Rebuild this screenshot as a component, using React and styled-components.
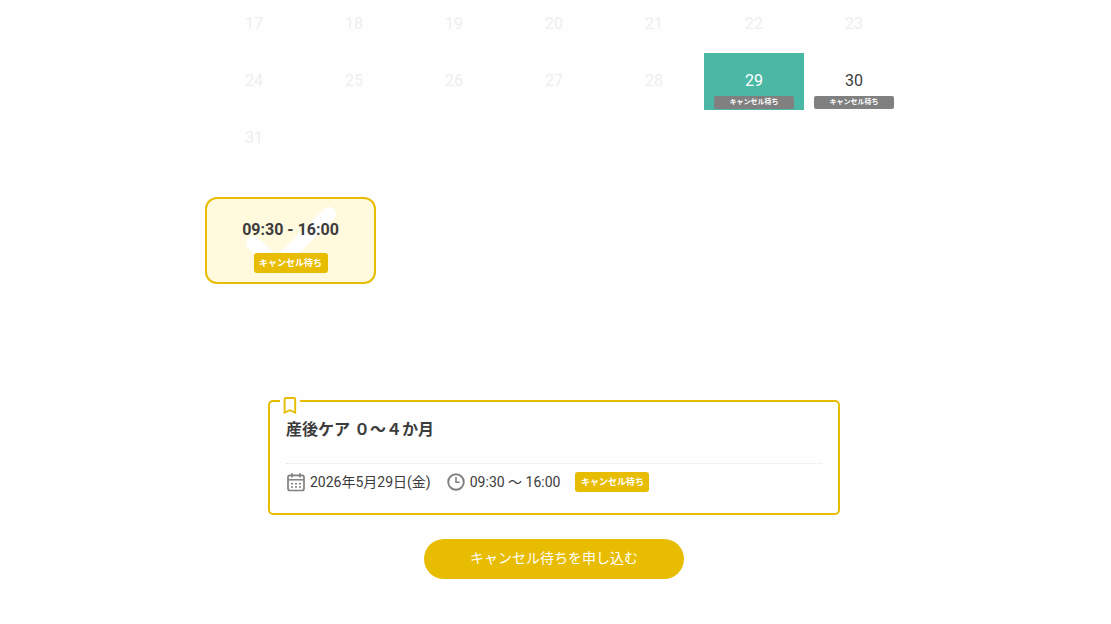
import React, { useState } from 'react';
import styled, { createGlobalStyle } from 'styled-components';

const GOLD = '#e8bc00';

const GlobalStyle = createGlobalStyle`
  *, *::before, *::after { box-sizing: border-box; }
  body {
    margin: 0;
    background: #fefefe;
    color: #3c3c3c;
    font-family: Roboto, "Noto Sans CJK JP", sans-serif;
    font-size: 14px;
    line-height: 20px;
  }
  button { font: inherit; color: inherit; border: 0; padding: 0; background: none; cursor: pointer; }
`;

const Page = styled.main`
  padding: 0 3px 44px 0;
  overflow: hidden;
`;

const Section = styled.section`
  max-width: ${(p) => p.$width}px;
  margin: 0 auto;
`;

const Calendar = styled.table`
  width: 100%;
  margin-top: -4px;
  table-layout: fixed;
  border-collapse: collapse;
`;

const Cell = styled.td`
  height: 57px;
  padding: 0;
  vertical-align: top;
  text-align: center;
  background: ${(p) => (p.$selected ? '#4bb8a5' : 'transparent')};
`;

const Day = styled.button`
  display: flex;
  flex-direction: column;
  align-items: center;
  gap: 5px;
  width: 100%;
  height: 57px;
  padding: 18px 10px 0;
  font-size: 16px;
  color: ${(p) => (p.$selected ? '#fff' : '#3c3c3c')};
  &:disabled { color: #eee; cursor: default; }
`;

const DayTag = styled.span`
  width: 100%;
  border-radius: 2px;
  background: #808080;
  color: #fff;
  font-size: 7px;
  font-weight: 700;
  line-height: 13px;
`;

const Slots = styled.div`
  display: flex;
  flex-wrap: wrap;
  gap: 8px;
  padding: 30px 1px 0;
`;

const Slot = styled.button`
  position: relative;
  display: flex;
  flex-direction: column;
  align-items: center;
  gap: 13px;
  width: 171px;
  height: 87px;
  padding-top: 21px;
  border: 2px solid ${GOLD};
  border-radius: 12px;
  background: #fff9de;
`;

const SlotTime = styled.span`
  position: relative;
  font-size: 16px;
  font-weight: 700;
`;

const CheckMark = styled.svg`
  position: absolute;
  top: 0;
  left: 36px;
`;

const Badge = styled.span`
  position: relative;
  width: 74px;
  border-radius: 3px;
  background: ${GOLD};
  color: #fff;
  font-size: 9px;
  font-weight: 700;
  line-height: 20px;
  text-align: center;
`;

const Summary = styled.article`
  position: relative;
  margin-top: 116px;
  padding: 16px 16px 21px;
  border: 2px solid ${GOLD};
  border-radius: 5px;
`;

const Bookmark = styled.span`
  position: absolute;
  top: -6px;
  left: 10px;
  display: flex;
  justify-content: center;
  width: 20px;
  background: #fefefe;
`;

const Title = styled.h2`
  margin: 0;
  padding-bottom: 21px;
  border-bottom: 1px dotted #e6e6e6;
  font-size: 16px;
  line-height: 24px;
`;

const Details = styled.div`
  display: flex;
  flex-wrap: wrap;
  align-items: center;
  gap: 15px;
  padding-top: 8px;
`;

const Detail = styled.span`
  display: flex;
  align-items: center;
  gap: 4px;
`;

const Submit = styled.button`
  display: block;
  width: 260px;
  height: 40px;
  margin: 24px auto 0;
  padding-bottom: 3px;
  border-radius: 20px;
  background: ${GOLD};
  color: #fff;
`;

const weeks = [
  [17, 18, 19, 20, 21, 22, 23],
  [24, 25, 26, 27, 28, 29, 30],
  [31, null, null, null, null, null, null],
];
const waiting = [29, 30];

function CalendarIcon() {
  return (
    <svg width="20" height="20" viewBox="0 0 20 20" fill="none" stroke="#808080" aria-hidden="true">
      <rect x="2" y="3.3" width="16" height="15.2" rx="2" strokeWidth="1.7" />
      <path d="M2 7.8h16" strokeWidth="1.5" />
      <path d="M6 1.3v4.2M14 1.3v4.2" strokeWidth="1.7" />
      <path d="M5 11.8h2M9 11.8h2M13 11.8h2M5 15h2M9 15h2M13 15h2" strokeWidth="1.5" />
    </svg>
  );
}

function ClockIcon() {
  return (
    <svg width="20" height="20" viewBox="0 0 20 20" fill="none" stroke="#808080" strokeWidth="1.9" aria-hidden="true">
      <circle cx="10" cy="10" r="7.8" />
      <path d="M10 5v5.2h3.7" strokeWidth="1.6" />
    </svg>
  );
}

export default function App() {
  const [selected, setSelected] = useState(29);
  return (
    <Page>
      <GlobalStyle />
      <Section $width={700}>
        <Calendar>
          <tbody>
            {weeks.map((week) => (
              <tr key={week[0]}>
                {week.map((day, i) => (
                  <Cell key={i} $selected={day !== null && day === selected}>
                    {day && (
                      <Day
                        type="button"
                        $selected={day === selected}
                        disabled={!waiting.includes(day)}
                        onClick={() => setSelected(day)}
                      >
                        {day}
                        {waiting.includes(day) && <DayTag>キャンセル待ち</DayTag>}
                      </Day>
                    )}
                  </Cell>
                ))}
              </tr>
            ))}
          </tbody>
        </Calendar>
        <Slots>
          <Slot type="button" aria-pressed="true">
            <CheckMark width="96" height="64" viewBox="0 0 96 64" fill="none" aria-hidden="true">
              <path d="M10 44L34 66L86 15" stroke="#fff" strokeWidth="14" strokeLinecap="round" strokeLinejoin="round" />
            </CheckMark>
            <SlotTime>09:30 - 16:00</SlotTime>
            <Badge>キャンセル待ち</Badge>
          </Slot>
        </Slots>
      </Section>
      <Section $width={572}>
        <Summary>
          <Bookmark>
            <svg width="20" height="20" viewBox="0 0 20 20" fill="none" stroke={GOLD} strokeWidth="1.9" aria-hidden="true">
              <path d="M4.6 16.6V3.2Q4.6 2 5.8 2H14Q15.2 2 15.2 3.2V16.6L9.9 14.2z" />
            </svg>
          </Bookmark>
          <Title>産後ケア ０〜４か月</Title>
          <Details>
            <Detail><CalendarIcon />2026年5月29日(金)</Detail>
            <Detail><ClockIcon />09:30 〜 16:00</Detail>
            <Badge>キャンセル待ち</Badge>
          </Details>
        </Summary>
        <Submit type="button">キャンセル待ちを申し込む</Submit>
      </Section>
    </Page>
  );
}
